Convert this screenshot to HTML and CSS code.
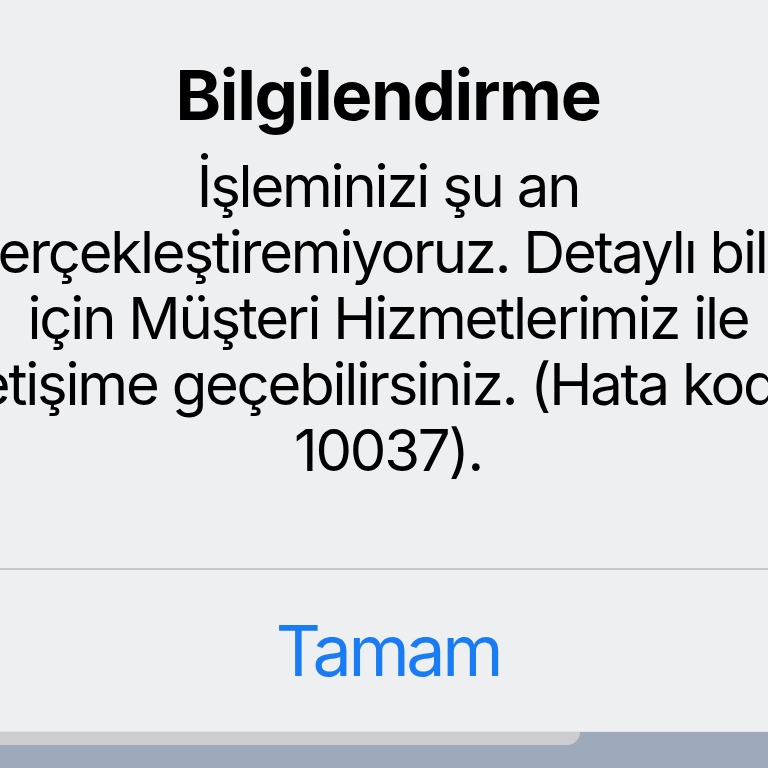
FILE: index.html
```html
<!DOCTYPE html>
<html lang="tr">
<head>
<meta charset="utf-8">
<title>Bilgilendirme</title>
<link rel="stylesheet" href="styles.css">
</head>
<body>
<div class="screen">
  <div class="alert">
    <div class="alert-body">
      <div class="alert-title">Bilgilendirme</div>
      <div class="alert-message">İşleminizi şu an<br>gerçekleştiremiyoruz. Detaylı bilgi<br>için Müşteri Hizmetlerimiz ile<br>iletişime geçebilirsiniz. (Hata kodu:<br>10037).</div>
    </div>
    <div class="alert-sep"></div>
    <div class="alert-button">Tamam</div>
  </div>
  <div class="under-band"></div>
</div>
</body>
</html>
```
FILE: styles.css
```css
html, body {
  margin: 0;
  padding: 0;
}
body {
  width: 768px;
  height: 768px;
  overflow: hidden;
  background: #9eaabb;
  font-family: Inter, "Noto Sans", sans-serif;
}
.screen {
  width: 768px;
  height: 768px;
  overflow: hidden;
}
.alert {
  width: 1100px;
  margin-left: -162px;
  height: 732px;
  background: #eeeff1;
  border-bottom: 1px solid #e4e4e6;
  box-sizing: border-box;
  display: flex;
  flex-direction: column;
}
.alert-body {
  height: 568px;
  box-sizing: border-box;
  padding-top: 55px;
  text-align: center;
  color: #000;
}
.alert-title {
  font-size: 69px;
  line-height: 80px;
  font-weight: 700;
  letter-spacing: -1.4px;
}
.alert-message {
  margin-top: 18px;
  font-size: 58px;
  line-height: 66px;
  font-weight: 400;
  letter-spacing: -2.2px;
}
.alert-sep {
  height: 2px;
  background: #c8c8cc;
}
.alert-button {
  flex: 1;
  display: flex;
  align-items: center;
  justify-content: center;
  font-size: 70px;
  line-height: 80px;
  letter-spacing: -3.4px;
  color: #1a7cf4;
}
.under-band {
  width: 580px;
  height: 13px;
  background: #cdcdcf;
  border-bottom-right-radius: 14px;
}
```
